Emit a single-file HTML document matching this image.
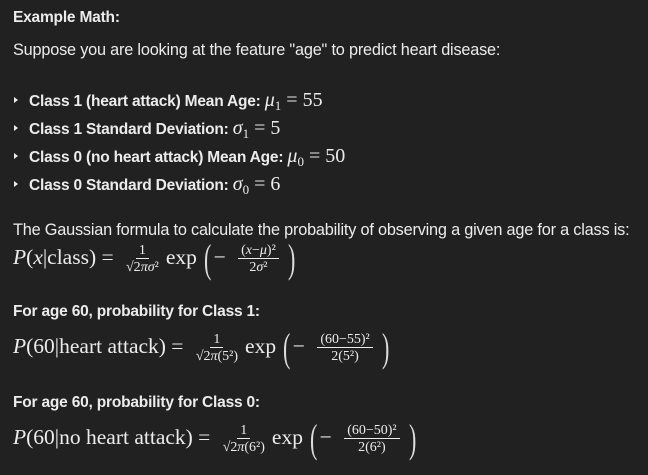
<!DOCTYPE html>
<html><head><style>
body{margin:0;width:648px;height:475px;background:#212121;color:#ececec;font-family:"Liberation Sans",sans-serif;overflow:hidden;position:relative}
.t{position:absolute;left:13px;white-space:nowrap;font-size:16.3px;letter-spacing:-0.2px}
.tb{font-size:15.5px;letter-spacing:-0.2px}
b{font-weight:bold}
.m{font-family:"Liberation Serif",serif;font-size:20px;letter-spacing:0}
.mm{font-family:"Liberation Serif",serif;font-size:21.5px;letter-spacing:0}
i{font-style:italic}
sub{font-size:13px;vertical-align:-4px}
.f{display:inline-flex;flex-direction:column;align-items:center;vertical-align:middle;font-size:14px;line-height:13px;margin:0 7px 0 7px}
.f .n{border-bottom:1px solid #ececec;padding:0 3px 1px}
.f .d{padding-top:2px}
.p{font-size:40px;font-weight:100;vertical-align:middle;transform:scaleX(0.55);display:inline-block;line-height:24px;color:#ddd;margin:0 -1px}
.bl{position:absolute;left:14px;width:0;height:0;border-top:3px solid transparent;border-bottom:3px solid transparent;border-left:4px solid #ececec}
.li{left:29px}
</style></head><body>
<div class="t tb" style="top:9px"><b>Example Math:</b></div>
<div class="t" style="top:41px">Suppose you are looking at the feature "age" to predict heart disease:</div>
<div class="bl" style="top:97px"></div><div class="t tb li" style="top:89px"><b>Class 1 (heart attack) Mean Age:</b> <span class="m"><i>μ</i><sub>1</sub> = 55</span></div>
<div class="bl" style="top:125px"></div><div class="t tb li" style="top:117px"><b>Class 1 Standard Deviation:</b> <span class="m"><i>σ</i><sub>1</sub> = 5</span></div>
<div class="bl" style="top:153px"></div><div class="t tb li" style="top:145px"><b>Class 0 (no heart attack) Mean Age:</b> <span class="m"><i>μ</i><sub>0</sub> = 50</span></div>
<div class="bl" style="top:181px"></div><div class="t tb li" style="top:173px"><b>Class 0 Standard Deviation:</b> <span class="m"><i>σ</i><sub>0</sub> = 6</span></div>
<div class="t" style="top:221px">The Gaussian formula to calculate the probability of observing a given age for a class is:</div>
<div class="t mm" style="top:244px"><i>P</i>(<i>x</i>|class) = <span class="f"><span class="n">1</span><span class="d">√2<i>πσ</i>²</span></span>exp <span class="p">(</span>− <span class="f"><span class="n">(<i>x</i>−<i>μ</i>)²</span><span class="d">2<i>σ</i>²</span></span><span class="p">)</span></div>
<div class="t tb" style="top:303px"><b>For age 60, probability for Class 1:</b></div>
<div class="t mm" style="top:333px"><i>P</i>(60|heart attack) = <span class="f"><span class="n">1</span><span class="d">√2<i>π</i>(5²)</span></span>exp <span class="p">(</span>− <span class="f"><span class="n">(60−55)²</span><span class="d">2(5²)</span></span><span class="p">)</span></div>
<div class="t tb" style="top:394px"><b>For age 60, probability for Class 0:</b></div>
<div class="t mm" style="top:424px"><i>P</i>(60|no heart attack) = <span class="f"><span class="n">1</span><span class="d">√2<i>π</i>(6²)</span></span>exp <span class="p">(</span>− <span class="f"><span class="n">(60−50)²</span><span class="d">2(6²)</span></span><span class="p">)</span></div>
</body></html>
